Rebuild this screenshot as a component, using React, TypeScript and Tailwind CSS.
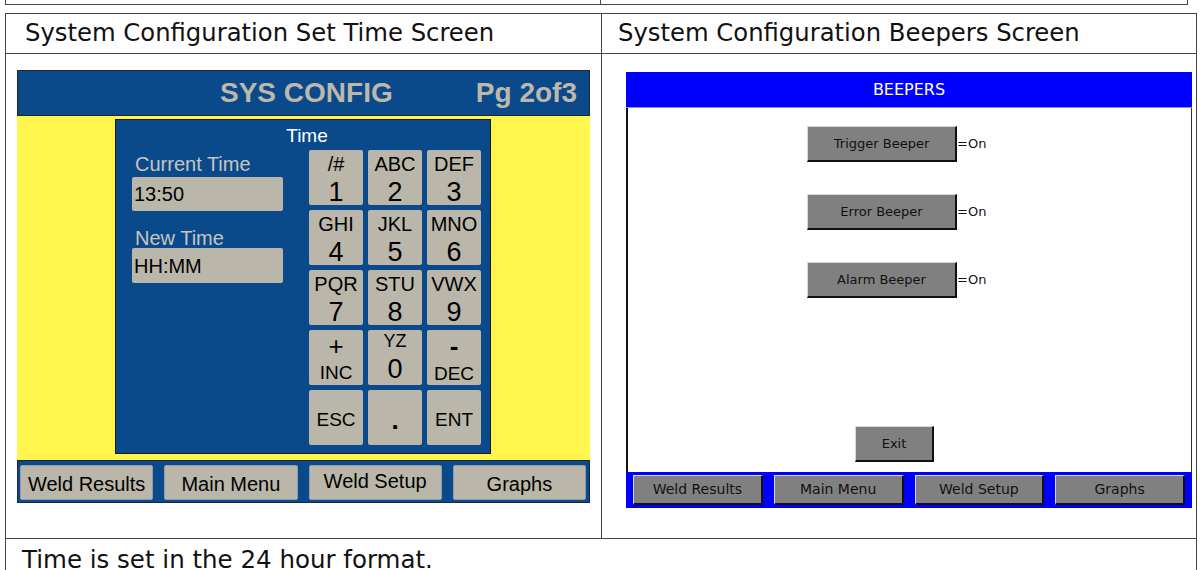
const keys = [
  { top: "/#", bottom: "1" },
  { top: "ABC", bottom: "2" },
  { top: "DEF", bottom: "3" },
  { top: "GHI", bottom: "4" },
  { top: "JKL", bottom: "5" },
  { top: "MNO", bottom: "6" },
  { top: "PQR", bottom: "7" },
  { top: "STU", bottom: "8" },
  { top: "VWX", bottom: "9" },
]

function Key({ top, bottom }: { top: string; bottom: string }) {
  return (
    <div className="h-[55px] bg-[#bab7aa] rounded-[2px] flex flex-col items-center text-black">
      <span className="mt-[4px] text-[20px] leading-[20px]">{top}</span>
      <span className="mt-[5px] text-[27px] leading-[27px]">{bottom}</span>
    </div>
  )
}

function SetTimeScreen() {
  const nav = ["Weld Results", "Main Menu", "Weld Setup", "Graphs"]
  return (
    <div className="w-[573px] h-[433px] flex flex-col font-['Liberation_Sans',Arial,sans-serif]">
      {/* title bar */}
      <div className="h-[46px] bg-[#0a4a8a] border border-[#1c2636] flex items-center font-bold text-[28px] text-[#bdb8ab]">
        <span className="ml-[202px]">SYS CONFIG</span>
        <span className="ml-auto mr-[12px]">Pg 2of3</span>
      </div>

      {/* yellow body with the time keypad */}
      <div className="flex-1 bg-[#fff54d] pt-[3px] pl-[98px]">
        <div className="w-[376px] h-[335px] bg-[#0a4a8a] border border-[#1a1a1a] pt-[6px]">
          <div className="text-center pl-[8px] text-white text-[19px] leading-[19px]">Time</div>
          <div className="flex mt-[5px]">
            <div className="ml-[16px] w-[151px] pt-[4px]">
              <div className="pl-[3px] text-[20px] leading-[20px] text-[#c8c5bd]">Current Time</div>
              <div className="mt-[3px] h-[34px] bg-[#bab7aa] rounded-[2px] flex items-center pl-[2px] text-[20px] text-black">13:50</div>
              <div className="mt-[17px] pl-[3px] text-[20px] leading-[20px] text-[#c8c5bd]">New Time</div>
              <div className="h-[35px] bg-[#bab7aa] rounded-[2px] flex items-center pl-[2px] text-[20px] text-black">HH:MM</div>
            </div>
            <div className="ml-[26px] grid grid-cols-[54px_54px_54px] gap-[5px]">
              {keys.map((k) => (
                <Key key={k.bottom} top={k.top} bottom={k.bottom} />
              ))}
              <div className="h-[55px] bg-[#bab7aa] rounded-[2px] flex flex-col items-center text-black">
                <span className="mt-[3px] text-[26px] leading-[26px]">+</span>
                <span className="mt-[4px] text-[19px] leading-[19px]">INC</span>
              </div>
              <div className="h-[55px] bg-[#bab7aa] rounded-[2px] flex flex-col items-center text-black">
                <span className="mt-[2px] text-[18px] leading-[18px]">YZ</span>
                <span className="mt-[6px] text-[27px] leading-[27px]">0</span>
              </div>
              <div className="h-[55px] bg-[#bab7aa] rounded-[2px] flex flex-col items-center text-black">
                <span className="mt-[3px] text-[26px] leading-[26px] font-bold">-</span>
                <span className="mt-[5px] text-[19px] leading-[19px]">DEC</span>
              </div>
              <div className="h-[55px] bg-[#bab7aa] rounded-[2px] flex items-center justify-center pt-[6px] text-[19px] text-black">ESC</div>
              <div className="h-[55px] bg-[#bab7aa] rounded-[2px] flex items-center justify-center pt-[6px] text-[26px] font-bold text-black">.</div>
              <div className="h-[55px] bg-[#bab7aa] rounded-[2px] flex items-center justify-center pt-[6px] text-[19px] text-black">ENT</div>
            </div>
          </div>
        </div>
      </div>

      {/* bottom nav */}
      <div className="h-[43px] bg-[#0a4a8a] border border-[#1c2636] flex gap-[11px] pl-[2px] pr-[3px] pt-[4px] pb-[2px]">
        {nav.map((n) => (
          <div
            key={n}
            className={`flex-1 bg-[#bab7aa] border border-[#8d9cb0] rounded-[2px] flex items-center justify-center text-[20px] text-black ${
              n === "Weld Setup" ? "pb-[4px]" : "pt-[2px]"
            }`}
          >
            {n}
          </div>
        ))}
      </div>
    </div>
  )
}

const bevel =
  "bg-[#808080] border-t border-l border-b-2 border-r-2 border-t-[#d8d8d8] border-l-[#d8d8d8] border-b-[#111] border-r-[#111] flex items-center justify-center text-[#111]"

function BeepersScreen() {
  const beepers = ["Trigger Beeper", "Error Beeper", "Alarm Beeper"]
  const nav = ["Weld Results", "Main Menu", "Weld Setup", "Graphs"]
  return (
    <div className="w-[566px] flex flex-col font-['DejaVu_Sans',Tahoma,sans-serif]">
      <div className="h-[36px] bg-[#0000ff] border-b border-[#8c8cff] flex items-center justify-center text-white text-[16px]">
        BEEPERS
      </div>
      <div className="h-[364px] bg-white border-l-2 border-l-[#111] border-r border-r-[#333] flex flex-col">
        {beepers.map((b, i) => (
          <div key={b} className={`flex items-center ml-[179px] ${i === 0 ? "mt-[18px]" : "mt-[32px]"}`}>
            <div className={`w-[150px] h-[36px] text-[13px] ${bevel}`}>{b}</div>
            <span className="text-[13px] text-[#111]">=On</span>
          </div>
        ))}
        <div className="mt-auto mb-[10px] ml-[227px]">
          <div className={`w-[79px] h-[36px] text-[13px] ${bevel}`}>Exit</div>
        </div>
      </div>
      <div className="h-[36px] bg-[#0000ff] flex gap-[11px] px-[7px] pt-[3px] pb-[3px]">
        {nav.map((n) => (
          <div key={n} className={`flex-1 text-[14px] ${bevel}`}>
            {n}
          </div>
        ))}
      </div>
    </div>
  )
}

export default function App() {
  return (
    <div className="w-[1202px] h-[570px] overflow-hidden bg-white text-[#111] font-['DejaVu_Sans',Verdana,sans-serif]">
      {/* tail of the table above */}
      <div className="ml-[5px] w-[1183px] h-[5px] flex border-x border-b border-[#444]">
        <div className="w-[595px] border-r border-[#444]" />
      </div>

      <div className="mt-[8px] ml-[5px] w-[1192px] border border-[#444]">
        <div className="grid grid-cols-[596px_1fr] h-[40px] border-b border-[#444]">
          <div className="border-r border-[#444] pl-[19px] flex items-center text-[24.3px]">
            System Configuration Set Time Screen
          </div>
          <div className="pl-[16px] flex items-center text-[24.3px]">System Configuration Beepers Screen</div>
        </div>
        <div className="grid grid-cols-[596px_1fr] h-[485px] border-b border-[#444]">
          <div className="border-r border-[#444] pl-[11px] pt-[16px]">
            <SetTimeScreen />
          </div>
          <div className="pl-[24px] pt-[18px]">
            <BeepersScreen />
          </div>
        </div>
        <div className="pl-[16px] pt-[3px] text-[24.5px]">Time is set in the 24 hour format.</div>
      </div>
    </div>
  )
}
